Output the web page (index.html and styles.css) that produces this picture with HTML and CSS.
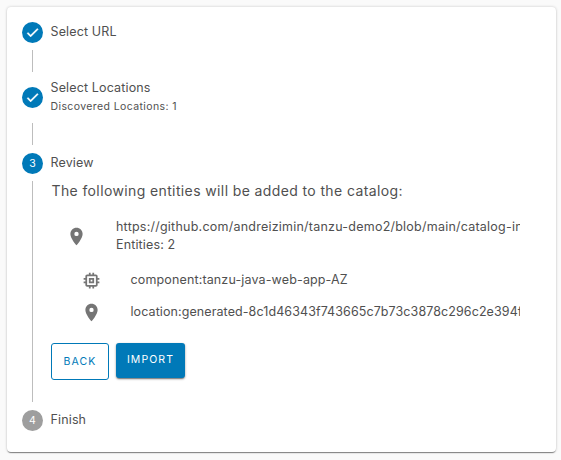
FILE: index.html
```html
<!DOCTYPE html>
<html lang="en">
<head>
<meta charset="utf-8">
<title>Import</title>
<link rel="stylesheet" href="styles.css">
</head>
<body>
<svg width="0" height="0" class="defs">
  <symbol id="pin" viewBox="0 0 24 24"><path d="M12 2C8.13 2 5 5.13 5 9c0 5.25 7 13 7 13s7-7.75 7-13c0-3.87-3.13-7-7-7zm0 9.500a2.500 2.500 0 0 1 0-5 2.500 2.500 0 0 1 0 5z"/></symbol>
  <symbol id="memory" viewBox="0 0 24 24"><path d="M15 9H9v6h6V9zm-2 4h-2v-2h2v2zm8-2V9h-2V7c0-1.100-.9-2-2-2h-2V3h-2v2h-2V3H9v2H7c-1.100 0-2 .9-2 2v2H3v2h2v2H3v2h2v2c0 1.100.9 2 2 2h2v2h2v-2h2v2h2v-2h2c1.100 0 2-.9 2-2v-2h2v-2h-2v-2h2zm-4 6H7V7h10v10z"/></symbol>
  <symbol id="check" viewBox="0 0 24 24"><path d="M9 16.170 4.830 12l-1.420 1.410L9 19 21 7l-1.410-1.410z"/></symbol>
</svg>
<main class="card">
  <div class="step">
    <span class="badge"><svg class="check"><use href="#check"/></svg></span>
    <span class="label">Select URL</span>
  </div>
  <div class="connector"></div>
  <div class="step step-tall">
    <span class="badge"><svg class="check"><use href="#check"/></svg></span>
    <div class="labels">
      <div class="label">Select Locations</div>
      <div class="caption">Discovered Locations: 1</div>
    </div>
  </div>
  <div class="connector"></div>
  <div class="step">
    <span class="badge">3</span>
    <span class="label">Review</span>
  </div>
  <section class="content">
    <h1 class="title">The following entities will be added to the catalog:</h1>
    <ul class="list">
      <li class="item item-root">
        <svg class="icon"><use href="#pin"/></svg>
        <div class="text"><span class="url">https://github.com/andreizimin/tanzu-demo2/blob/main/catalog-in</span><br>Entities: 2</div>
      </li>
      <li class="item item-child">
        <svg class="icon"><use href="#memory"/></svg>
        <div class="text">component:tanzu-java-web-app-AZ</div>
      </li>
      <li class="item item-child">
        <svg class="icon"><use href="#pin"/></svg>
        <div class="text"><span class="location">location:generated-8c1d46343f743665c7b73c3878c296c2e394f</span></div>
      </li>
    </ul>
    <div class="actions">
      <button class="button back">BACK</button>
      <button class="button import">IMPORT</button>
    </div>
  </section>
  <div class="step">
    <span class="badge badge-idle">4</span>
    <span class="label">Finish</span>
  </div>
</main>
</body>
</html>
```
FILE: styles.css
```css
* { box-sizing: border-box; }
body {
  margin: 0;
  padding: 7px 5px 8px 7px;
  background: #fafafa;
  color: #505050;
  font-family: Inter, "Open Sans", sans-serif;
  font-size: 12.500px;
}
.defs { display: block; height: 0; }
.card {
  height: 445px;
  padding: 14px 36px 0 15px;
  background: #fff;
  border-radius: 4px;
  box-shadow: 0 2px 1px -1px rgba(0,0,0,.3), 0 1px 1px rgba(0,0,0,.2), 0 0 3px rgba(0,0,0,.2);
}
.step { display: flex; align-items: center; height: 22px; }
.step-tall { height: 37px; }
.labels { padding-bottom: 2px; }
.badge {
  display: flex;
  align-items: center;
  justify-content: center;
  flex: none;
  width: 21px;
  height: 21px;
  margin-right: 7.500px;
  border-radius: 50%;
  background: #0079b8;
  color: #fff;
  font-size: 10.500px;
}
.badge-idle { background: #9e9e9e; }
.check { width: 15px; height: 15px; fill: #fff; stroke: #fff; stroke-width: .8; }
.label { line-height: 18px; letter-spacing: .14px; }
.caption { font-size: 10.500px; line-height: 17px; letter-spacing: .39px; margin-top: 1px; }
.connector { width: 1px; height: 22px; margin: 7px 0 7px 10px; background: #bdbdbd; }
.content {
  height: 221px;
  margin: 7px 0 7px 10px;
  padding-left: 18px;
  border-left: 1px solid #bdbdbd;
}
.title { margin: 0 0 0 .5px; font-size: 14px; font-weight: 400; line-height: 20px; letter-spacing: .38px; white-space: nowrap; }
.list { margin: 17px 0 0; padding: 0; list-style: none; }
.item { display: flex; align-items: center; overflow: hidden; white-space: nowrap; }
.item-root { height: 36px; padding-left: 15px; margin-bottom: 10px; }
.item-child { height: 32px; padding-left: 29.500px; }
.icon { flex: none; width: 21px; height: 21px; margin-right: 29px; fill: #757575; }
.text { line-height: 18px; letter-spacing: .14px; }
.url { letter-spacing: .23px; }
.location { letter-spacing: .09px; }
.actions { display: flex; gap: 7px; margin-top: 15px; }
.button {
  padding: 0;
  border: 0;
  border-radius: 3px;
  font-family: inherit;
  font-size: 10.500px;
  letter-spacing: 1.100px;
}
.back { width: 58px; height: 37px; border: 1px solid #0079b8; background: #fff; color: #0079b8; }
.import {
  width: 69px;
  height: 35px;
  padding-bottom: 2px;
  background: #0079b8;
  color: #fff;
  box-shadow: 0 2px 1px -1px rgba(0,0,0,.25), 0 1px 2px rgba(0,0,0,.3), 0 1px 3px rgba(0,0,0,.15);
}
```
